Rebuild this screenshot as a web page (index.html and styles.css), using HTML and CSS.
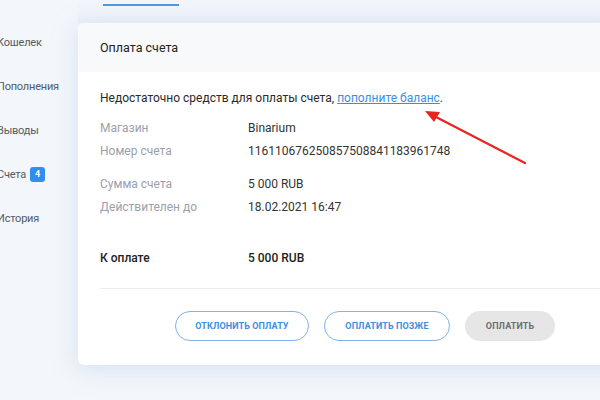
FILE: index.html
```html
<!DOCTYPE html>
<html lang="ru">
<head>
<meta charset="utf-8">
<link rel="stylesheet" href="styles.css">
</head>
<body>
<div class="page">
  <aside class="sidebar">
    <div class="nav-item">Кошелек</div>
    <div class="nav-item">Пополнения</div>
    <div class="nav-item">Выводы</div>
    <div class="nav-item">Счета <span class="badge">4</span></div>
    <div class="nav-item">История</div>
  </aside>
  <main class="main">
    <div class="tabs"><span class="tab-line"></span></div>
    <section class="card">
      <header class="card-head">Оплата счета</header>
      <div class="card-body">
        <p class="notice">Недостаточно средств для оплаты счета, <a class="link" href="#">пополните баланс</a>.</p>
        <div class="rows">
          <span class="label">Магазин</span><span class="value">Binarium</span>
          <span class="label">Номер счета</span><span class="value">116110676250857508841183961748</span>
        </div>
        <div class="rows group">
          <span class="label">Сумма счета</span><span class="value">5 000 RUB</span>
          <span class="label">Действителен до</span><span class="value">18.02.2021 16:47</span>
        </div>
        <div class="rows total">
          <span class="label strong">К оплате</span><span class="value strong">5 000 RUB</span>
        </div>
        <div class="divider"></div>
        <div class="actions">
          <button class="btn outline w1">Отклонить оплату</button>
          <button class="btn outline w2">Оплатить позже</button>
          <button class="btn disabled w3">Оплатить</button>
        </div>
      </div>
    </section>
  </main>
  <svg class="arrow" width="600" height="400" viewBox="0 0 600 400">
    <line x1="525" y1="163" x2="436" y2="117" stroke="#e82420" stroke-width="2.2" stroke-linecap="round"/>
    <polygon points="425,111 440,112 434,122" fill="#e82420"/>
  </svg>
</div>
</body>
</html>
```

FILE: styles.css
```css
* { box-sizing: border-box; }
html, body {
  margin: 0;
  padding: 0;
  width: 600px;
  height: 400px;
  overflow: hidden;
  background: #f3f6fa;
  font-family: Roboto, "Liberation Sans", Arial, sans-serif;
  color: #222;
}
.page {
  position: relative;
  display: flex;
  width: 600px;
  height: 400px;
}
.sidebar {
  width: 81px;
  flex: none;
  padding-top: 20px;
  margin-left: -3px;
  font-size: 11px;
  letter-spacing: -0.2px;
  color: #555b63;
}
.nav-item {
  height: 44px;
  display: flex;
  align-items: center;
  white-space: nowrap;
  gap: 4px;
}
.badge {
  display: inline-flex;
  align-items: center;
  justify-content: center;
  width: 15px;
  height: 15px;
  border-radius: 3px;
  background: #2f8ff0;
  color: #fff;
  font-size: 9px;
  font-weight: 700;
  letter-spacing: 0;
}
.main {
  flex: none;
  width: 560px;
  display: flex;
  flex-direction: column;
}
.tabs {
  height: 23px;
  padding-top: 4px;
  background: linear-gradient(#f3f6fa, #eaf0f9);
}
.tab-line {
  display: block;
  margin-left: 25px;
  width: 76px;
  height: 2px;
  background: #4d98e6;
}
.card {
  background: #fff;
  border-radius: 6px 0 0 6px;
  box-shadow: 0 4px 22px rgba(190, 208, 238, 0.55);
  height: 342px;
}
.card-head {
  height: 49px;
  display: flex;
  align-items: center;
  padding-left: 22px;
  background: #f8f9fb;
  border-radius: 6px 0 0 0;
  font-size: 12.5px;
  color: #222;
}
.card-body {
  padding: 16px 0 0 22px;
  font-size: 12px;
}
.notice {
  margin: 0 0 8px;
  line-height: 20px;
  color: #2a2a2a;
}
.link {
  color: #3a8ee2;
  text-decoration: underline;
}
.rows {
  display: grid;
  grid-template-columns: 148px auto;
  grid-auto-rows: 23px;
  align-items: center;
}
.group { margin-top: 10px; }
.total { margin-top: 28px; }
.label { color: #9aa1aa; }
.value { color: #333; }
.strong { color: #222; font-weight: 500; }
.divider {
  margin-top: 19px;
  height: 1px;
  background: #ececec;
}
.actions {
  display: flex;
  gap: 15px;
  padding-left: 75px;
  margin-top: 22px;
}
.btn {
  height: 30px;
  border-radius: 15px;
  font-family: Roboto, "Liberation Sans", Arial, sans-serif;
  font-size: 9px;
  font-weight: 700;
  text-transform: uppercase;
  letter-spacing: 0.1px;
  display: flex;
  align-items: center;
  justify-content: center;
  padding: 0;
}
.outline {
  background: #fff;
  border: 1px solid #7fb3ea;
  color: #3d8ee0;
}
.disabled {
  background: #e6e6e6;
  border: none;
  color: #6e6e6e;
}
.w1 { width: 134px; }
.w2 { width: 126px; }
.w3 { width: 90px; }
.arrow {
  position: absolute;
  left: 0;
  top: 0;
  pointer-events: none;
}
```
